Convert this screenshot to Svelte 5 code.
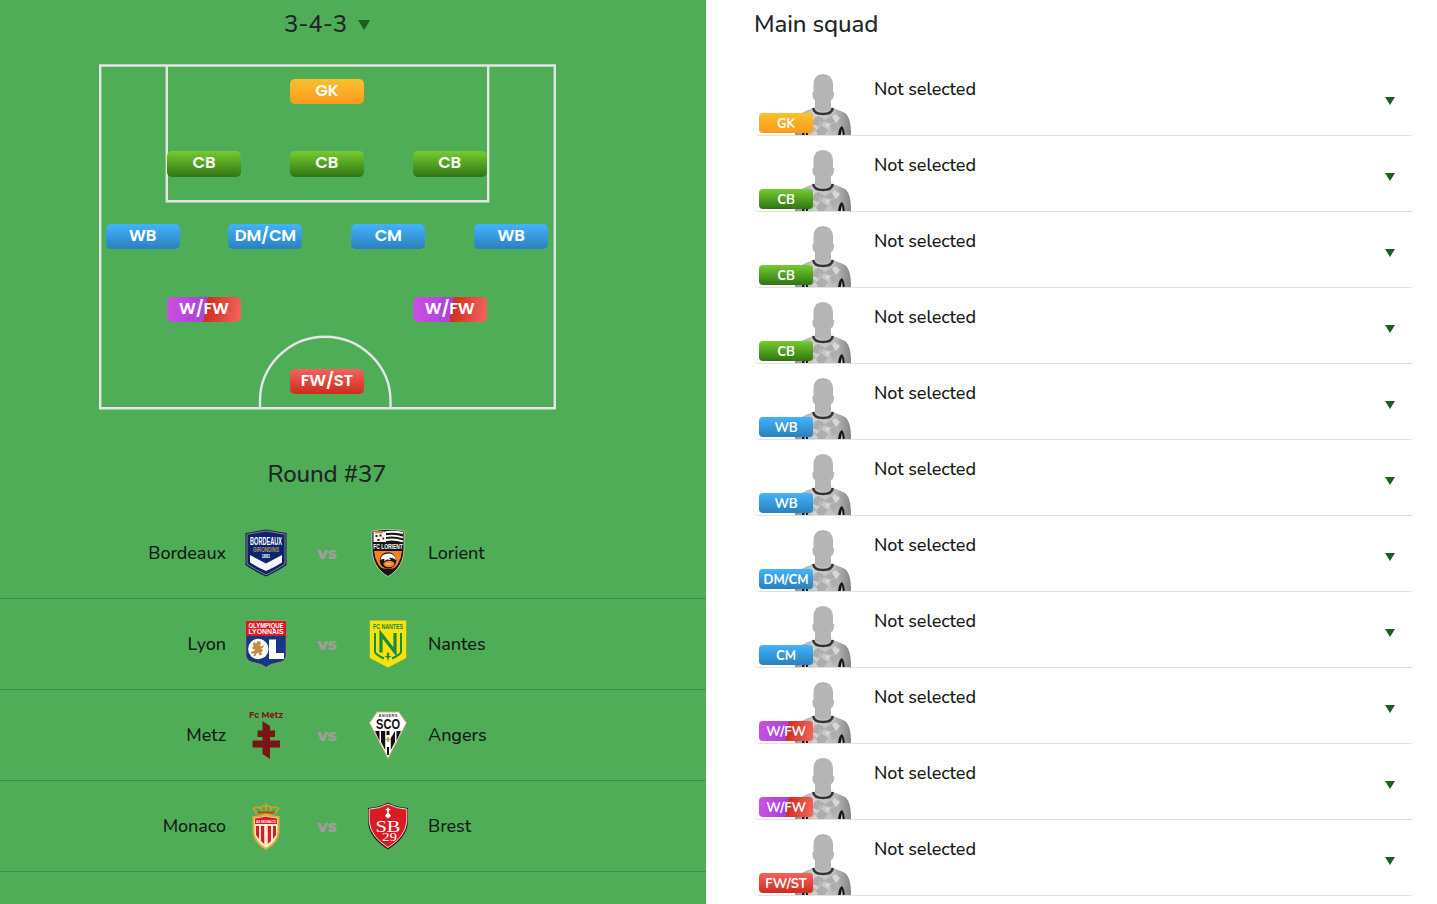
<script>
  const lines = [
    { gap: 0, items: [['GK', 'gk']] },
    { gap: 48.8, items: [['CB', 'cb'], ['CB', 'cb'], ['CB', 'cb']] },
    { gap: 48.8, items: [['WB', 'mid'], ['DM/CM', 'mid'], ['CM', 'mid'], ['WB', 'mid']] },
    { gap: 171.8, items: [['W/FW', 'wing'], ['W/FW', 'wing']] },
    { gap: 0, items: [['FW/ST', 'fw']] }
  ];
  const squad = lines.flatMap((l) => l.items);
  squad.splice(4, 4, ['WB', 'mid'], ['WB', 'mid'], ['DM/CM', 'mid'], ['CM', 'mid']);
  const matches = [
    ['Bordeaux', 'Lorient'],
    ['Lyon', 'Nantes'],
    ['Metz', 'Angers'],
    ['Monaco', 'Brest']
  ];
</script>

{#snippet crest(name)}
  <svg class="crest" viewBox="0 0 48 48">
    {#if name === 'Bordeaux'}
      <path d="M3.5 4Q15 2 24 .5Q33 2 44.5 4V36Q36 42 24 47.5Q12 42 3.5 36Z" fill="#0b1f5c" />
      <path d="M5 5.3Q15 3.5 24 2Q33 3.5 43 5.3V35Q35 40.5 24 45.8Q13 40.5 5 35Z" fill="#0b2470" stroke="#b59a6a" stroke-width=".8" />
      <path d="M8 26L24 34.5L40 26V33.5Q33 38 24 42Q15 38 8 33.5Z" fill="#f4f6fa" />
      <text x="24" y="15.5" font-size="10.5" textLength="32" lengthAdjust="spacingAndGlyphs" fill="#fff">BORDEAUX</text>
      <text x="24" y="23" font-size="7.4" textLength="26" lengthAdjust="spacingAndGlyphs" fill="#b3965f">GIRONDINS</text>
      <text x="24" y="28.8" font-size="4.5" textLength="8.5" lengthAdjust="spacingAndGlyphs" fill="#fff">1881</text>
    {:else if name === 'Lorient'}
      <path d="M8 2Q16 .5 24 .5T40 2V18C40 32 35 41 24 47.5C13 41 8 32 8 18Z" fill="#171514" stroke="#d5d0c8" stroke-width=".8" />
      <path d="M9.5 2.6H22V13H9.5Z" fill="#f5f5f2" /><path d="M11 2.4h8v2h-8z" fill="#f58220" />
      <path d="M11.5 6h2v2h-2zM15.5 5.5h2v2h-2zM18.5 8.5h1.6v2h-1.6zM13.5 10h2v2h-2z" fill="#292725" />
      <path d="M22 3.2Q30 2 39 4M22 7.2Q30 5.5 39 8.5M22 11Q30 9.5 39 12.3" fill="none" stroke="#fff" stroke-width="1.8" />
      <text x="24" y="19.9" font-size="6.8" textLength="29.5" lengthAdjust="spacingAndGlyphs" fill="#fff">FC LORIENT</text>
      <path d="M10 22H38Q37 36 24 45Q11 36 10 22Z" fill="#f58220" />
      <path d="M15 38Q24 42 33 38Q29 43 24 45.5Q19 43 15 38Z" fill="#171514" />
      <circle cx="24" cy="31.5" r="8.3" fill="#171514" />
      <path d="M16.5 31Q17 24.5 25 24.5Q31 25 32 31Q28 28 25 29L27 31L23 30.5L20 32L20.5 30Q18 29.5 16.5 31Z" fill="#fff" />
      <ellipse cx="25" cy="35" rx="5.5" ry="3.2" fill="#f58220" />
      <path d="M22 35h5" fill="none" stroke="#eee" stroke-width=".9" />
    {:else if name === 'Lyon'}
      <path d="M3.8.5H44.2V36Q43 42 35 43Q28 44 24 47.5Q20 44 13 43Q5 42 3.8 36Z" fill="#143980" stroke="#b69857" stroke-width=".8" />
      <path d="M4.3 1H43.7V16H4.3Z" fill="#df1824" />
      <text x="24" y="7.6" font-size="7" textLength="35" lengthAdjust="spacingAndGlyphs" fill="#fff">OLYMPIQUE</text>
      <text x="24" y="14.3" font-size="7" textLength="35" lengthAdjust="spacingAndGlyphs" fill="#fff">LYONNAIS</text>
      <circle cx="16.3" cy="29" r="10.2" fill="#fff" />
      <path d="M11 23l2-1 1 2 1.5-3 3 .5.5 2.5-1.5 1.5 2 1 2.500-2-1 3-2 1 2 1.500-2 2.500 1.500 2-3 1-1-3-2 1-1 2.500-3 .5 2-2.500-1.500-1-2 1.500.5-3 2.500-.5 1.500-2-2 .5-2-2 2-.5z" fill="#c38c3d" />
      <path d="M27 19.500h7v13.500h8v6H27Z" fill="#fff" />
    {:else if name === 'Nantes'}
      <path d="M5.8 .5H42.2V38L24 47.5L5.8 38Z" fill="#f9e20a" />
      <text x="24" y="9" font-size="6.4" textLength="30" lengthAdjust="spacingAndGlyphs" fill="#168b45">FC NANTES</text>
      <g fill="none" stroke="#168b45" stroke-width="2">
        <path d="M11 13V32Q11 34 20 38.5M37 13V32Q37 34 28 38.5" />
        <path d="M17 32.5V14L31 32V13" stroke-width="3.2" />
      </g>
      <path d="M24 32l1.500 2-.8 1.500 2.800 1-2.500 1-1 4-1-4-2.500-1 2.800-1-.8-1.500z" fill="#168b45" />
    {:else if name === 'Metz'}
      <text class="wide" x="24" y="7" font-size="9" textLength="34" lengthAdjust="spacingAndGlyphs" fill="#7b1718">Fc Metz</text>
      <path d="M20.5 10L28 15V19.5H33V26H28V29.5H38V36.5H28V48L20.5 43V36.5H10.5V29.5H20.5V26H15.5V19.5H20.5Z" fill="#7b1415" />
    {:else if name === 'Angers'}
      <path d="M13 1H35L42.5 12L24 47.5L5.5 12Z" fill="#fff" stroke="#c7a96c" stroke-width="1" />
      <text x="24" y="5.5" font-size="4" textLength="19" fill="#444">ANGERS</text>
      <text x="24" y="18" font-size="15" textLength="24" lengthAdjust="spacingAndGlyphs" fill="#111">SCO</text>
      <path d="M11 20h4.500v10zM17 20h4.200v19l-4.200-8zM23 36h2v8h-2zM26.800 27l4.200-7v11l-4.200 8zM32.500 20h4.500l-4.500 10zM22.500 20h3v4h-3z" fill="#111" />
      <path d="M24 26v5M21.5 28.5h5" stroke="#c39b52" stroke-width="1.7" />
    {:else if name === 'Monaco'}
      <path d="M15 11.5L11.500 6.500Q16 4 18.500 6Q20 3 24 4.500Q28 3 29.500 6Q32 4 36.500 6.500L33 11.500Z" fill="none" stroke="#d99b27" stroke-width="1.7" />
      <path d="M24 .5v9M18.500 6l2 4M29.500 6l-2 4" stroke="#dba32e" stroke-width="1.3" />
      <path d="M15.500 10.500h17" stroke="#ad4a1b" stroke-width="2" />
      <path d="M11.5 15Q18 15 24 12.5Q30 15 36.5 15V30Q36 40 24 47Q12 40 11.5 30Z" fill="#f7edcf" stroke="#e0ad35" stroke-width="2" />
      <path d="M13 16.5Q19 16 24 14.5Q29 16 35 16.5V22H13Z" fill="#d91b27" />
      <text x="24" y="20.8" font-size="4.4" textLength="20" lengthAdjust="spacingAndGlyphs" fill="#fff">AS MONACO</text>
      <path d="M14 24h3v13l-3-4zM19 24h3.2v18l-3.2-3zM25.8 24H29v15l-3.2 3zM31 24h3v9l-3 4z" fill="#d91b27" />
    {:else}
      <path d="M4 6Q16 5 24 .5Q32 5 44 6V20Q43 36 24 47.5Q5 36 4 20Z" fill="#39191b" />
      <path d="M5.2 7.2Q16 6.5 24 2.2Q32 6.5 42.8 7.2V20Q41 35 24 45.5Q7 35 5.2 20Z" fill="#d81c24" stroke="#f2dfdc" stroke-width="1" />
      <path d="M24 5l1 1.800 2 .7-2 1-.4 2L27 14l-3 2.500L21 14l2.400-3.500L23 8.500l-2-1 2-.7z" fill="#fff" />
      <text class="serif" x="24" y="30" font-size="16.5" textLength="25" lengthAdjust="spacingAndGlyphs" fill="#fff">SB</text>
      <text class="serif" x="25.500" y="38.500" font-size="13" textLength="15" lengthAdjust="spacingAndGlyphs" fill="#fff">29</text>
    {/if}
  </svg>
{/snippet}

<main>
  <section class="tactics">
    <h2 class="formation"><span>3-4-3</span><i class="arrow big"></i></h2>
    <div class="pitch">
      <svg class="markings" viewBox="0 0 457 346" fill="none" stroke="#e5e5e5" stroke-width="2.4">
        <path d="M1.2 1.5H455.8V344.2H1.2ZM67.8 1.5V137.2H389.2V1.5M161 345V337C161 302 190 272.7 226 272.7S291.5 302 291.5 337V345" />
      </svg>
      {#each lines as line}
        <div class="line" style="gap:{line.gap}px">
          {#each line.items as [label, kind]}<span class="badge {kind}">{label}</span>{/each}
        </div>
      {/each}
    </div>
    <h2 class="round">Round #37</h2>
    <div class="matches">
      {#each matches as [home, away]}
        <div class="match">
          <span class="home">{home}</span>
          {@render crest(home)}
          <span class="vs">vs</span>
          {@render crest(away)}
          <span class="away">{away}</span>
        </div>
      {/each}
    </div>
  </section>

  <section class="squad">
    <h2>Main squad</h2>
    <svg class="defs" width="0" height="0">
      <defs>
        <linearGradient id="shirt"><stop stop-color="#8d8d8d" /><stop offset=".35" stop-color="#d2d2d2" /><stop offset=".7" stop-color="#bcbcbc" /><stop offset="1" stop-color="#858585" /></linearGradient>
        <symbol id="player" viewBox="0 0 56 61">
          <path d="M0 61Q0 43 7 39Q12 36 19 33.500L28 38L37 33.500Q44 36 50 39Q56 43 56 61Z" fill="url(#shirt)" />
          <path d="M17 44l7-2 6 4 7-4 5 4-6 4-7-3-5 5-7-2zM21 57l5-6 7 5-4 5h-6zM35 51l7-3 0 7-5 3z" fill="#adadad" />
          <path d="M12 40l8 3-3 5-6 1zM30 50l6-1-4 6zM40 40l5 4-4 5-4-6z" fill="#d8d8d8" />
          <path d="M13 51l5 1 4 4-6 3zM24 47l5 2-5 3z" fill="#b9b9b9" />
          <path d="M20 35V26Q17.500 25 17.500 21Q17 17.500 18.500 18V10Q19 0 28 0T38 10V18Q39.500 17.500 39 21Q38.500 25 36 26V35Q28 41 20 35Z" fill="#b5b5b5" />
          <path d="M18.200 34Q19 40 28 40T37.800 34" fill="none" stroke="#333" stroke-width="2.4" />
          <path d="M7 61Q8 54 10 52Q13 55 13 61ZM43 61Q44 53 47 52Q50 56 49.5 61Z" fill="#171717" />
          <path d="M9.500 61L10 55L11 61M45.800 61L47 55L47.600 61Z" fill="#e1e1e1" />
        </symbol>
      </defs>
    </svg>
    {#each squad as [label, kind]}
      <div class="player">
        <div class="portrait">
          <svg class="figure" viewBox="0 0 56 61"><use href="#player" /></svg>
          <span class="badge small {kind}">{label}</span>
        </div>
        <span class="name">Not selected</span>
        <i class="arrow"></i>
      </div>
    {/each}
  </section>
</main>

<style>
  :global(body) { background: #fff; overflow: hidden; }
  main { display: flex; width: 1437px; height: 904px; overflow: hidden; font-family: Nunito, "Noto Sans", sans-serif; font-size: 18px; font-weight: 550; letter-spacing: -.06px; color: #161a17; }
  h2 { margin: 0; font-size: 24px; line-height: 30px; font-weight: 550; color: #212529; letter-spacing: -.1px; }
  .tactics { width: 706px; flex: none; box-sizing: border-box; background: #4fad57; padding-top: 9px; }
  .formation, .round, .pitch { width: 654px; }
  .formation { height: 55px; display: flex; justify-content: center; gap: 11px; }
  .formation .arrow { margin-top: 11px; }
  .arrow { display: block; width: 10px; height: 8px; background: #1b5e20; clip-path: polygon(0 0, 100% 0, 50% 100%); }
  .arrow.big { width: 12px; height: 10px; }
  .pitch { height: 346px; box-sizing: border-box; padding: 14.9px .4px 0 0; position: relative; display: flex; flex-direction: column; gap: 47.38px; }
  .markings { position: absolute; left: 99px; top: 0; width: 457px; height: 346px; }
  .line { display: flex; justify-content: center; position: relative; }
  .badge { width: 74px; height: 25.2px; border-radius: 5px; box-sizing: border-box; color: #fff; font: 600 16.5px/23px Poppins, Montserrat, sans-serif; letter-spacing: -.2px; text-align: center; white-space: nowrap; }
  .badge.small { position: absolute; left: 5px; bottom: 2px; width: 54px; height: 20px; border-radius: 4px; font: 700 13px/22px Nunito, "Noto Sans", sans-serif; letter-spacing: -.1px; }
  .gk { background: linear-gradient(#fbc02d, #f99b1c); }
  .cb { background: linear-gradient(#76cc30, #2f7513); }
  .mid { background: linear-gradient(#42b4fc, #2b7fbd); }
  .fw { background: linear-gradient(#f4625d, #cf2c1b); }
  .wing { background: linear-gradient(100deg, #cd50e0, #a943d9 52%, #d02e1d 52%, #f46560); }
  .round { text-align: center; margin-top: 49px; }
  .matches { margin-top: 19px; }
  .match { height: 91px; box-sizing: border-box; border-bottom: 1px solid #408f48; display: grid; grid-template-columns: 226px 16px 48px 74px 48px 16px 1fr; align-items: center; line-height: 24px; }
  .home { grid-column: 1; text-align: right; }
  .match .crest:nth-of-type(1) { grid-column: 3; }
  .vs { grid-column: 4; text-align: center; font: 800 17px/24px Montserrat, Nunito, sans-serif; color: #9e9e9e; }
  .match .crest:nth-of-type(2) { grid-column: 5; }
  .away { grid-column: 7; }
  .crest { width: 48px; height: 48px; display: block; }
  .crest text { font-family: "Liberation Sans Narrow", "Liberation Sans", sans-serif; font-weight: 700; text-anchor: middle; letter-spacing: 0; }
  .crest .wide { font-family: Montserrat, sans-serif; }
  .crest .serif { font-family: "Liberation Serif", serif; font-weight: 400; }
  .squad { width: 661px; padding: 9px 0 0 48px; }
  .squad h2 { height: 51px; }
  .defs { position: absolute; }
  .player { height: 76px; box-sizing: border-box; border-bottom: 1px solid #e0e0e0; border-radius: 5px; display: flex; align-items: flex-end; }
  .portrait { width: 120px; height: 61px; position: relative; }
  .figure { display: block; width: 56px; height: 61px; margin-left: 41px; }
  .name { flex: 1; align-self: flex-start; margin-top: 17px; line-height: 24px; }
  .player .arrow { margin: 0 20px 30px 0; }
</style>
